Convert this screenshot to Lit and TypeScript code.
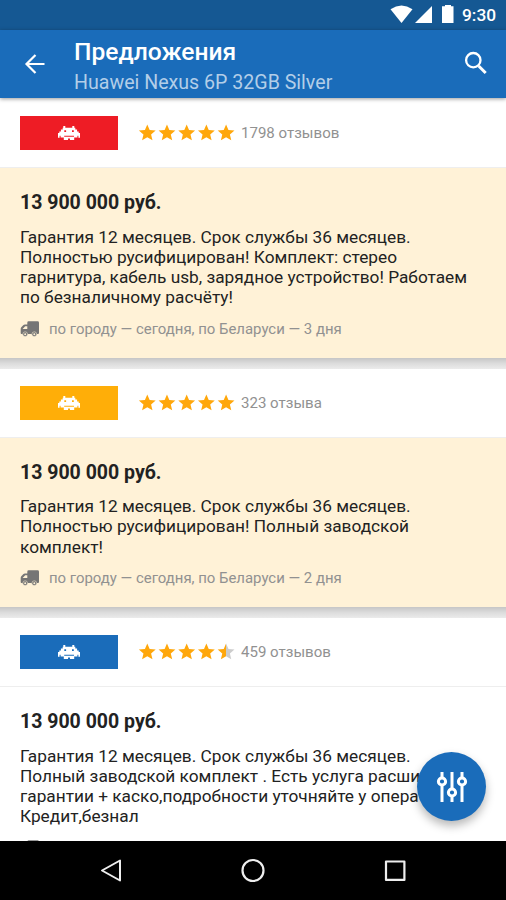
import { LitElement, html, svg, css } from "lit";
import { customElement, property } from "lit/decorators.js";

interface Offer {
  tone: string;
  rating: number;
  reviews: string;
  price: string;
  lines: string[];
  delivery: string;
  promoted: boolean;
}

const OFFERS: Offer[] = [
  {
    tone: "red", rating: 5, reviews: "1798 отзывов", price: "13 900 000 руб.", promoted: true,
    lines: ["Гарантия 12 месяцев. Срок службы 36 месяцев.", "Полностью русифицирован! Комплект: стерео", "гарнитура, кабель usb, зарядное устройство! Работаем", "по безналичному расчёту!"],
    delivery: "по городу — сегодня, по Беларуси — 3 дня",
  },
  {
    tone: "amber", rating: 5, reviews: "323 отзыва", price: "13 900 000 руб.", promoted: true,
    lines: ["Гарантия 12 месяцев. Срок службы 36 месяцев.", "Полностью русифицирован! Полный заводской", "комплект!"],
    delivery: "по городу — сегодня, по Беларуси — 2 дня",
  },
  {
    tone: "blue", rating: 4.5, reviews: "459 отзывов", price: "13 900 000 руб.", promoted: false,
    lines: ["Гарантия 12 месяцев. Срок службы 36 месяцев.", "Полный заводской комплект . Есть услуга расширенной", "гарантии + каско,подробности уточняйте у оператора.", "Кредит,безнал"],
    delivery: "",
  },
];

const INVADER =
  "M5.3 0h2v1.8h7V0h2v1.8h1V3.6h1.8v1.8h1.6V7H22v4.8h-1.6v-2h-1V11.4H16.2V14h-4.2v-1.6h-2V14H5.8v-2.6H2.6V9.8h-1v2H0V7h1.3V5.4h1.6V3.6h1.8V1.8h.6z" +
  "M6.3 4.3v1.8h1.8V4.3zM14 4.3v1.8h1.8V4.3zM6.2 9.8v.9h9.8v-.9z";

const STAR = "M12 17.27 18.18 21l-1.64-7.03L22 9.24l-7.19-.61L12 2 9.19 8.63 2 9.24l5.46 4.73L5.82 21z";

@customElement("status-bar")
class StatusBar extends LitElement {
  static styles = css`
    :host { display: block; height: 30px; background: #155893; color: #fff; }
    .row { display: flex; height: 30px; justify-content: flex-end; padding-right: 10px; }
    .time { font: 500 17.3px/31px Roboto, sans-serif; width: 34px; white-space: nowrap; }
    svg { display: block; margin-right: 8px; }
  `;
  render() {
    return html`<div class="row">
      <svg width="64" height="30" viewBox="390 0 64 30" fill="#fff">
        <path d="M390.5 9.2Q401.5 1.8 412.5 9.2L401.5 23z" />
        <path d="M432 6v17h-17z" />
        <path d="M445 5h6v1.3h2.5V23H442V6.3h3z" />
      </svg>
      <div class="time">9:30</div>
    </div>`;
  }
}

@customElement("app-header")
class AppHeader extends LitElement {
  static styles = css`
    :host { display: block; position: relative; z-index: 2; background: #1a6cba; box-shadow: 0 1px 4px rgba(0, 0, 0, 0.4); }
    .bar { display: flex; height: 68px; box-sizing: border-box; padding: 0 18px 0 22px; }
    .back { margin: 22px 27px 0 0; flex: none; }
    .titles { flex: 1; padding-top: 7px; white-space: nowrap; }
    .title { font: 500 24.6px/30px Roboto, sans-serif; color: #fff; }
    .sub { font: 400 19.6px/28px Roboto, sans-serif; color: #b3cee8; margin-top: 2px; }
    .search { margin-top: 20px; flex: none; }
  `;
  render() {
    return html`<div class="bar">
      <svg class="back" width="25" height="24" viewBox="22 52 25 24" fill="none" stroke="#fff" stroke-width="2.2">
        <path d="M44.5 64H26.5M35.5 55L26.5 64l9 9" />
      </svg>
      <div class="titles">
        <div class="title">Предложения</div>
        <div class="sub">Huawei Nexus 6P 32GB Silver</div>
      </div>
      <svg class="search" width="25" height="26" viewBox="463 50 25 26" fill="none" stroke="#fff">
        <circle cx="473.3" cy="60.2" r="7.2" stroke-width="2.3" />
        <path d="M478.7 66l7 7" stroke-width="3" />
      </svg>
    </div>`;
  }
}

@customElement("offer-card")
class OfferCard extends LitElement {
  @property({ attribute: false }) offer!: Offer;
  static styles = css`
    :host { display: block; font-family: Roboto, sans-serif; background: #fff; }
    .head { display: flex; align-items: center; height: 69px; box-sizing: border-box; padding-left: 20px; border-bottom: 1px solid #eee; }
    .logo { display: flex; align-items: center; justify-content: center; width: 98px; height: 34px; margin-right: 20px; }
    .red { background: #ee1c25; }
    .amber { background: #ffae08; }
    .blue { background: #1a6cba; }
    .stars { margin-right: 6px; }
    .reviews { font-size: 15.05px; line-height: 20px; color: #919191; white-space: nowrap; }
    .body { padding: 22px 0 19px 20px; }
    .promoted { background: #fff2d7; }
    .price { font-size: 19.5px; font-weight: 700; line-height: 25px; color: #222; margin-bottom: 11.6px; }
    .text { font-size: 17.28px; line-height: 20.15px; color: #222; white-space: nowrap; }
    .delivery { display: flex; align-items: center; height: 20px; margin-top: 11.4px; font-size: 14.93px; color: #919191; white-space: nowrap; }
    .truck { margin-right: 10px; }
    .edge { height: 11px; background: linear-gradient(#c6c6c6, #dcdcdc 50%, #ebebeb); }
  `;
  render() {
    const o = this.offer;
    return html`
      <div class="head">
        <div class="logo ${o.tone}">
          <svg width="22" height="14" viewBox="0 0 22 14" fill="#fff"><path fill-rule="evenodd" d=${INVADER} /></svg>
        </div>
        <svg class="stars" width="97" height="20" viewBox="0 0 97 20">
          <defs>
            <linearGradient id="half"><stop offset=".5" stop-color="#ffa70b" /><stop offset=".5" stop-color="#ccc" /></linearGradient>
          </defs>
          ${[0, 1, 2, 3, 4].map((i) => svg`<path d=${STAR} fill=${o.rating - i >= 1 ? "#ffa70b" : "url(#half)"} transform="translate(${i * 19.7 - 0.8} -.3) scale(.84)" />`)}
        </svg>
        <div class="reviews">${o.reviews}</div>
      </div>
      <div class="body ${o.promoted ? "promoted" : ""}">
        <div class="price">${o.price}</div>
        <div class="text">${o.lines.map((l) => html`<div>${l}</div>`)}</div>
        <div class="delivery">
          <svg class="truck" width="19" height="16" viewBox="0 0 19 16" fill="#757575">
            <path fill-rule="evenodd" d="M8.7.3h8.9A1.4 1.4 0 0 1 19 1.7v10.4a1 1 0 0 1-1 1H1.8c-.7 0-1.1-.4-1.1-1.1V8c0-.7.2-1.2.6-1.7l1.9-2c.5-.5 1-.8 1.8-.8h2.3V1.7A1.4 1.4 0 0 1 8.7.3zM7.3 5.2H5.2L2.6 8.1h4.7z" />
            <circle cx="5.2" cy="13.2" r="2.4" stroke="#fff2d7" stroke-width=".5" /><circle cx="14.3" cy="13.2" r="2.4" stroke="#fff2d7" stroke-width=".5" />
            <circle cx="5.2" cy="13.2" r="1" fill="#fff2d7" /><circle cx="14.3" cy="13.2" r="1" fill="#fff2d7" />
          </svg>
          <span>${o.delivery}</span>
        </div>
      </div>
      <div class="edge"></div>`;
  }
}

@customElement("nav-bar")
class NavBar extends LitElement {
  static styles = css`
    :host { display: block; height: 59px; background: #000; position: relative; z-index: 3; }
    .row { display: flex; justify-content: space-between; padding: 17px 99px 0 98.5px; }
  `;
  render() {
    return html`<div class="row">
      <svg width="24" height="26" viewBox="0 0 24 26" fill="none" stroke="#eee" stroke-width="2" stroke-linejoin="round"><path d="M21 2.5v20L3 12.5z" /></svg>
      <svg width="26" height="26" viewBox="0 0 26 26" fill="none" stroke="#eee" stroke-width="2.2"><circle cx="13" cy="12.5" r="10.5" /></svg>
      <svg width="24" height="26" viewBox="0 0 24 26" fill="none" stroke="#eee" stroke-width="2.2" stroke-linejoin="round"><rect x="3" y="3.5" width="18.4" height="18.4" /></svg>
    </div>`;
  }
}

@customElement("app-root")
class AppRoot extends LitElement {
  static styles = css`
    :host { display: flex; flex-direction: column; position: relative; height: 900px; width: 506px; overflow: hidden; background: #fff; }
    status-bar, app-header, nav-bar { flex: none; }
    .list { flex: 1; min-height: 0; overflow: hidden; display: flex; flex-direction: column; padding-top: 1px; }
    offer-card { flex: none; }
    .fab { position: absolute; right: 20px; bottom: 79px; width: 69px; height: 69px; border-radius: 50%; background: #1a6cba; box-shadow: 0 5px 10px rgba(0, 0, 0, 0.28); z-index: 2; display: flex; align-items: center; justify-content: center; }
  `;
  render() {
    return html`
      <status-bar></status-bar>
      <app-header></app-header>
      <div class="list">${OFFERS.map((o) => html`<offer-card .offer=${o}></offer-card>`)}</div>
      <div class="fab">
        <svg width="32" height="32" viewBox="0 0 32 32" fill="#1a6cba" stroke="#fff" stroke-width="3">
          <path d="M6 1v30M16 1v30M26 1v30" />
          <circle cx="6" cy="10.5" r="3.6" /><circle cx="16" cy="21.5" r="3.6" /><circle cx="26" cy="10.5" r="3.6" />
        </svg>
      </div>
      <nav-bar></nav-bar>`;
  }
}
